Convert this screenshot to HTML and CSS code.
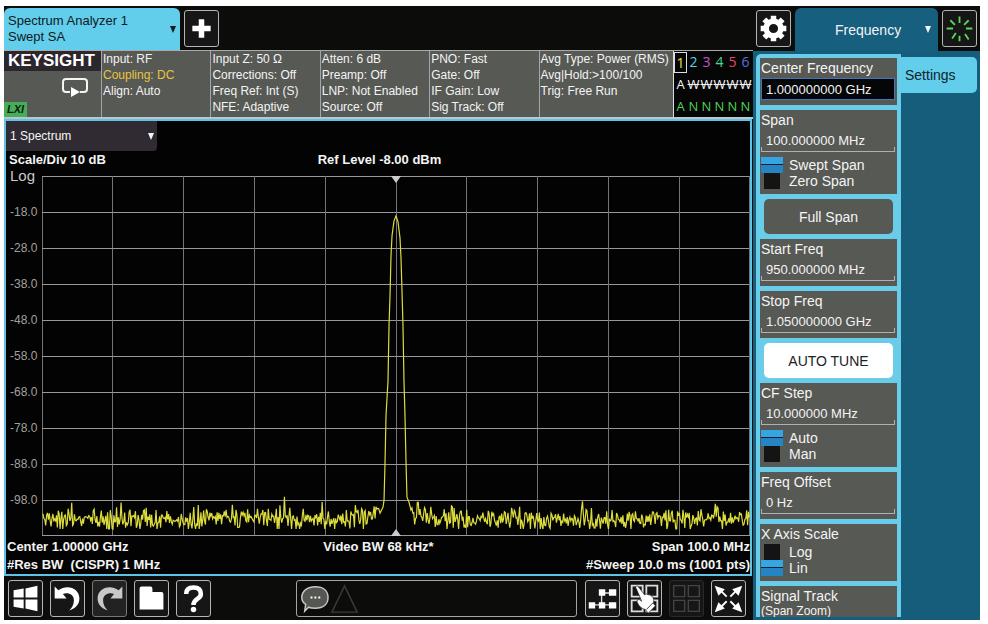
FILE: index.html
```html
<!DOCTYPE html>
<html lang="en">
<head>
<meta charset="utf-8">
<title>Spectrum Analyzer</title>
<link rel="stylesheet" href="styles.css">
</head>
<body>
<div class="screen">
  <main class="main">
    <header class="tabs">
      <button class="mode-tab" type="button"><span>Spectrum Analyzer 1<br>Swept SA</span><i class="caret"></i></button>
      <button class="tool" type="button" aria-label="Add screen">
        <svg viewBox="0 0 36 36"><path d="M18 8v20M8 18h20" stroke="#fff" stroke-width="6"/></svg>
      </button>
    </header>

    <section class="meas">
      <div class="brand">
        <div class="brand-name">KEYSIGHT</div>
        <svg class="sweep" viewBox="0 0 28 20"><path d="M9 15H5a3 3 0 0 1-3-3V5a3 3 0 0 1 3-3h18a3 3 0 0 1 3 3v7a3 3 0 0 1-3 3h-4" fill="none" stroke="#f4f4f4" stroke-width="2"/><path d="M10 10l9 5-9 5z" fill="#fff"/></svg>
        <div class="lxi">LXI</div>
      </div>
      <div class="cell">Input: RF<br><span class="warn">Coupling: DC</span><br>Align: Auto</div>
      <div class="cell">Input Z: 50 Ω<br>Corrections: Off<br>Freq Ref: Int (S)<br>NFE: Adaptive</div>
      <div class="cell">Atten: 6 dB<br>Preamp: Off<br>LNP: Not Enabled<br>Source: Off</div>
      <div class="cell">PNO: Fast<br>Gate: Off<br>IF Gain: Low<br>Sig Track: Off</div>
      <div class="cell">Avg Type: Power (RMS)<br>Avg|Hold:&gt;100/100<br>Trig: Free Run</div>
      <div class="traces">
        <b class="t1">1</b><b class="t2">2</b><b class="t3">3</b><b class="t4">4</b><b class="t5">5</b><b class="t6">6</b>
        <span>A</span><s>W</s><s>W</s><s>W</s><s>W</s><s>W</s>
        <em>A</em><em>N</em><em>N</em><em>N</em><em>N</em><em>N</em>
      </div>
    </section>

    <section class="window">
      <div class="window-tab">
        <select class="plain-select" aria-label="Measurement window"><option>1 Spectrum</option></select><i class="caret"></i>
      </div>
      <div class="info"><span>Scale/Div 10 dB</span><span>Ref Level -8.00 dBm</span><span></span></div>
      <div class="chart">
        <div class="axis"><span class="log">Log</span><span>-18.0</span><span>-28.0</span><span>-38.0</span><span>-48.0</span><span>-58.0</span><span>-68.0</span><span>-78.0</span><span>-88.0</span><span>-98.0</span></div>
        <div class="plot">
          <svg class="plot-svg" viewBox="0 0 710 361" preserveAspectRatio="none" role="img" aria-label="Spectrum trace">
            <g id="grid"></g>
            <polyline id="trace" points=""/>
            <path d="M350 0h10l-5 7zM350 361h10l-5-7z" fill="#c9cdd2"/>
          </svg>
        </div>
      </div>
      <div class="info foot"><span>Center 1.00000 GHz</span><span>Video BW 68 kHz*</span><span>Span 100.0 MHz</span></div>
      <div class="info foot"><span>#Res BW &nbsp;(CISPR) 1 MHz</span><span></span><span>#Sweep 10.0 ms (1001 pts)</span></div>
    </section>

    <footer class="toolbar">
      <button class="tool" type="button" aria-label="Windows">
        <svg viewBox="0 0 36 36" fill="#fff"><path d="M5 9l11-2v10H5zM18 7l13-3v13H18zM5 19h11v10L5 27zM18 19h13v13l-13-3z"/></svg>
      </button>
      <button class="tool" type="button" aria-label="Undo">
        <svg viewBox="0 0 36 36"><path d="M4 5v13h13l-4-5c6-2 12 1 12 7 0 5-2 8-5 11 7-2 11-7 11-13C31 7 18 2 8 9z" fill="#fff"/></svg>
      </button>
      <button class="tool dim" type="button" aria-label="Redo">
        <svg viewBox="0 0 36 36"><path d="M32 5v13H19l4-5c-6-2-12 1-12 7 0 5 2 8 5 11C9 29 5 24 5 18 5 7 18 2 28 9z" fill="#c8c8c8"/></svg>
      </button>
      <button class="tool" type="button" aria-label="File">
        <svg viewBox="0 0 36 36"><path d="M5 30V7q0-2 2-2h10q2 0 2 2v4h10q2 0 2 2v17z" fill="#fff"/></svg>
      </button>
      <button class="tool" type="button" aria-label="Help">
        <svg viewBox="0 0 36 36"><path d="M10 13c0-5 3-7 8-7s8 2 8 7c0 6-8 5-8 12" fill="none" stroke="#fff" stroke-width="5"/><circle cx="18" cy="30" r="3" fill="#fff"/></svg>
      </button>
      <div class="message">
        <svg viewBox="0 0 64 36"><path d="M18 6c8 0 13 4 13 11s-5 11-13 11c-3 0-5 0-7-1l-4 4 1-7c-3-2-4-4-4-7C4 10 10 6 18 6z" fill="#555753" stroke="#c8c8c8" stroke-width="1.5"/><path d="M13 17h2M17 17h2M21 17h2" stroke="#fff" stroke-width="2"/><path d="M48 5L61 32H35z" fill="none" stroke="#3a3a3a" stroke-width="1.5"/></svg>
      </div>
      <button class="tool" type="button" aria-label="Block diagram">
        <svg viewBox="0 0 36 36"><path d="M17 12h12M17 12v13M6 25h24" stroke="#ddd" stroke-width="1.5"/><path d="M14 8h7v7h-7zM25 8h8v7h-8zM3 22h7v7H3zM14 22h7v7h-7zM25 22h8v7h-8z" fill="#fff"/></svg>
      </button>
      <button class="tool" type="button" aria-label="Select window">
        <svg viewBox="0 0 36 36"><path d="M4 4h12v12H4zM20 4h12v12H20zM4 20h12v12H4zM20 20h12v12H20z" fill="none" stroke="#ddd" stroke-width="2"/><path d="M8 5q2-2 4 1l6 8q2-2 4 0 2-1 4 2 2 0 2 3l0 5 2 2-8 8-3-4q-6-1-9-8-1-3 2-3l3 2z" fill="#fff" stroke="#161616" stroke-width=".7"/><path d="M20 30l8-8" stroke="#333" stroke-width="1"/></svg>
      </button>
      <button class="tool off" type="button" aria-label="Window layout" disabled>
        <svg viewBox="0 0 36 36"><path d="M4 4h12v12H4zM20 4h12v12H20zM4 20h12v12H4zM20 20h12v12H20z" fill="none" stroke="#444" stroke-width="1.5"/></svg>
      </button>
      <button class="tool" type="button" aria-label="Full screen">
        <svg viewBox="0 0 36 36"><path d="M10 10l6 6M26 10l-6 6M10 27l6-6M26 27l-6-6" stroke="#fff" stroke-width="2"/><path d="M3 4l11 4-7 7zM33 4l-11 4 7 7zM3 33l4-11 7 7zM33 33l-4-11-7 7z" fill="#fff"/></svg>
      </button>
    </footer>
  </main>

  <aside class="side">
    <header class="side-head">
      <button class="tool" type="button" aria-label="System settings">
        <svg viewBox="0 0 36 36"><g fill="none" stroke="#fff"><circle cx="18" cy="18" r="8" stroke-width="6"/><path d="M18 4v5M18 27v5M4 18h5M27 18h5M8 8l4 4M24 24l4 4M28 8l-4 4M12 24l-4 4" stroke-width="6"/></g></svg>
      </button>
      <div class="menu-tab"><select class="plain-select" aria-label="Menu"><option>Frequency</option></select><i class="caret"></i></div>
      <button class="tool" type="button" aria-label="Busy">
        <svg viewBox="0 0 36 36"><path d="M18 5v7M18 26v6M4 18h7M25 18h7M8 9l5 5M28 9l-5 5M10 29l4-6M28 30l-4-6" stroke="#59d854" stroke-width="2"/></svg>
      </button>
    </header>
    <div class="side-body">
      <div class="controls">
        <div class="card"><label for="cf">Center Frequency</label><input class="value active" id="cf" type="text" value="1.000000000 GHz"></div>
        <div class="card"><label for="span">Span</label><input class="value" id="span" type="text" value="100.000000 MHz">
          <div class="switch gap"><label><input type="radio" name="span-type" checked>Swept Span</label><label><input type="radio" name="span-type">Zero Span</label></div></div>
        <button class="wide" type="button">Full Span</button>
        <div class="card"><label for="start">Start Freq</label><input class="value" id="start" type="text" value="950.000000 MHz"></div>
        <div class="card"><label for="stop">Stop Freq</label><input class="value" id="stop" type="text" value="1.050000000 GHz"></div>
        <button class="wide light" type="button">AUTO TUNE</button>
        <div class="card"><label for="step">CF Step</label><input class="value" id="step" type="text" value="10.000000 MHz">
          <div class="switch gap"><label><input type="radio" name="step-mode" checked>Auto</label><label><input type="radio" name="step-mode">Man</label></div></div>
        <div class="card"><label for="offset">Freq Offset</label><input class="value" id="offset" type="text" value="0 Hz"></div>
        <div class="card"><div class="title">X Axis Scale</div>
          <div class="switch"><label><input type="radio" name="x-scale">Log</label><label><input type="radio" name="x-scale" checked>Lin</label></div></div>
        <div class="card last"><div class="title">Signal Track</div><div class="sub">(Span Zoom)</div></div>
      </div>
      <nav class="pages"><a class="page-tab" href="#settings">Settings</a></nav>
    </div>
  </aside>
</div>
<script src="chart.js"></script>
</body>
</html>
```
FILE: styles.css
```css
* { box-sizing: border-box; }

body {
  margin: 0;
  padding: 6px 8px 4px 4px;
  height: 100vh;
  background: #fff;
  color: #f4f4f4;
  font: 14px/16px "Liberation Sans", Arial, sans-serif;
}

button, input, select { font: inherit; color: inherit; margin: 0; }

.screen {
  display: grid;
  grid-template-columns: minmax(0, 1fr) 227px;
  height: 100%;
  background: #0c0c0b;
  overflow: hidden;
}

.main { display: flex; flex-direction: column; min-width: 0; min-height: 0; }

.caret {
  width: 0;
  height: 0;
  border: 3px solid transparent;
  border-top: 7px solid currentColor;
  border-bottom: 0;
  pointer-events: none;
}

.tool {
  flex: none;
  width: 35px;
  height: 37px;
  padding: 0;
  border: 1px solid #b5b5b5;
  border-radius: 3px;
  background: #161616;
}
.tool svg { display: block; width: 33px; height: 35px; }
.tool.dim { border-color: #777; background: #222; }
.tool.off { border-color: #2a2a2a; }

/* top tabs */
.tabs { display: flex; align-items: center; gap: 4px; height: 44px; flex: none; }
.mode-tab {
  display: flex;
  align-items: center;
  justify-content: space-between;
  align-self: flex-end;
  width: 176px;
  height: 42px;
  padding: 0 4px;
  border: 0;
  border-radius: 6px 6px 0 0;
  background: #63cdec;
  color: #10191c;
  font-size: 13px;
  text-align: left;
}

/* measurement bar */
.meas {
  display: grid;
  grid-template-columns: 97px repeat(4, minmax(0, 109fr)) minmax(0, 134fr) 80px;
  height: 69px;
  flex: none;
  border-top: 1px solid #aaa;
  border-bottom: 2px solid #b9c6cb;
  background: #575955;
  font-size: 12px;
}
.brand { display: flex; flex-direction: column; justify-content: space-between; align-items: flex-start; }
.brand-name {
  width: 100%;
  height: 20px;
  padding-left: 4px;
  background: #2c262d;
  color: #fff;
  font: bold 17px/20px "Liberation Sans", Arial, sans-serif;
}
.sweep { width: 28px; height: 20px; margin-left: 57px; }
.lxi {
  width: 23px;
  height: 15px;
  background: #48ad58;
  color: #0c1a0e;
  font: italic bold 11px/15px "Liberation Sans", Arial, sans-serif;
  text-align: center;
}
.cell { border-left: 1px solid #a5a5a5; padding-left: 1px; white-space: nowrap; }
.warn { color: #e9c43c; }
.traces {
  display: grid;
  grid-template: repeat(3, 22px) / repeat(6, 13px);
  align-items: center;
  justify-items: center;
  border-left: 1px solid #ddd;
  background: #060606;
  font-family: "Open Sans", sans-serif;
  font-size: 13px;
}
.traces b { font-weight: 400; font-size: 14px; }
.traces em { color: #4fd257; font-style: normal; }
.traces .t1 { width: 13px; height: 21px; border: 1px solid #ddd; color: #e9e53a; line-height: 19px; text-align: center; }
.traces .t2 { color: #55d0e6; }
.traces .t3 { color: #cf4fd2; }
.traces .t4 { color: #4fd29a; }
.traces .t5 { color: #ec4464; }
.traces .t6 { color: #5570dc; }

/* measurement window */
.window {
  display: flex;
  flex: 1;
  flex-direction: column;
  min-height: 0;
  margin-right: 1px;
  border: 2px solid #5fc3e4;
  background: #030303;
}
.window-tab {
  display: flex;
  align-items: center;
  width: 151px;
  height: 30px;
  padding: 0 3px 0 4px;
  border-radius: 0 0 4px 0;
  background: #302b33;
  font-size: 12px;
}
.plain-select {
  flex: 1;
  min-width: 0;
  padding: 0;
  border: 0;
  background: transparent;
  appearance: none;
}
.info {
  display: grid;
  grid-template-columns: 1fr auto 1fr;
  padding: 0 0 0 3px;
  font-size: 13px;
  font-weight: 700;
  line-height: 18px;
  white-space: nowrap;
}
.info span:last-child { text-align: right; }
.foot { padding-left: 1px; }
.chart {
  display: grid;
  grid-template-columns: 36px minmax(0, 1fr);
  flex: 1;
  min-height: 0;
  padding: 7px 0 2px;
}
.axis {
  display: flex;
  flex-direction: column;
  justify-content: space-between;
  margin-top: -8px;
  padding: 0 3px 28px 4px;
  color: #a0a0a0;
  font-size: 12px;
  white-space: nowrap;
}
.log { color: #c8c8c8; font-size: 15px; }
.plot { min-height: 0; overflow: hidden; }
.plot-svg { display: block; width: 100%; height: 100%; }
.grid-line { stroke: #98989b; stroke-width: 1; shape-rendering: crispEdges; vector-effect: non-scaling-stroke; }
.grid-line.vertical { stroke: #747478; }
#trace { fill: none; stroke: #dcdc3c; stroke-width: 1.2; vector-effect: non-scaling-stroke; }

/* bottom toolbar */
.toolbar { display: flex; flex: none; align-items: center; gap: 7px; height: 44px; padding: 0 7px 0 4px; }
.message {
  flex: 1;
  height: 37px;
  margin-left: 78px;
  margin-right: 1px;
  border: 1px solid #a5a5a5;
  border-radius: 3px;
}
.message svg { display: block; width: 64px; height: 35px; }

/* side menu */
.side { display: flex; flex-direction: column; min-height: 0; }
.side-head { display: flex; align-items: center; gap: 4px; height: 45px; flex: none; padding: 0 3px; }
.menu-tab {
  display: flex;
  flex: 1;
  align-items: center;
  align-self: flex-end;
  height: 43px;
  padding: 0 7px 0 40px;
  border-radius: 6px 6px 0 0;
  background: #165f7f;
}
.side-body {
  display: flex;
  flex: 1;
  min-height: 0;
  padding: 3px;
  background: #165d7b;
}
.controls {
  display: flex;
  flex-direction: column;
  gap: 5px;
  width: 145px;
  padding: 4px 4px 0;
  overflow: hidden;
  border-radius: 5px 0 0 0;
  background: #69cdea;
}
.card { flex: none; padding: 0 2px 5px 1px; background: #575955; }
.card > label, .title { display: block; line-height: 20px; }
.value {
  display: block;
  width: 100%;
  height: 22px;
  padding: 0 5px;
  border: 0;
  border-bottom: 1px solid #b0b0b0;
  background:
    linear-gradient(#b0b0b0, #b0b0b0) 0 100% / 1px 4px no-repeat,
    linear-gradient(#b0b0b0, #b0b0b0) 100% 100% / 1px 4px no-repeat;
  font-size: 13px;
}
.value.active { padding: 0 4px; border: 1px solid #4474bd; background: #050608; }
.switch { display: flex; flex-direction: column; }
.switch.gap { margin-top: 5px; }
.switch label { display: flex; align-items: center; gap: 6px; height: 16px; }
.switch input {
  width: 16px;
  height: 16px;
  margin: 0 3px;
  border: 0;
  background: #141414;
  appearance: none;
}
.switch input:checked {
  width: 22px;
  margin: 0;
  background: linear-gradient(#35a5e4 0 7px, #12202a 7px 8px, #2585c2 8px);
}
.wide {
  flex: none;
  height: 35px;
  margin: 0 4px;
  border: 0;
  border-radius: 5px;
  background: #575955;
}
.wide.light { background: #fff; color: #222; }
.last { flex: 1; padding-bottom: 0; }
.sub { font-size: 12px; line-height: 10px; }
.pages { flex: 1; padding-top: 3px; }
.page-tab {
  display: flex;
  align-items: center;
  height: 36px;
  padding-left: 4px;
  border-radius: 0 5px 5px 0;
  background: #63cdec;
  color: #10222a;
  text-decoration: none;
}
```
FILE: chart.js
```js
const NS = "http://www.w3.org/2000/svg";
const W = 710, H = 361;
const grid = document.getElementById("grid");

function line(x1, y1, x2, y2, cls) {
  const el = document.createElementNS(NS, "line");
  el.setAttribute("x1", x1);
  el.setAttribute("y1", y1);
  el.setAttribute("x2", x2);
  el.setAttribute("y2", y2);
  el.setAttribute("class", cls);
  grid.appendChild(el);
}

for (let i = 0; i <= 10; i++) {
  const x = Math.min(W - 0.5, Math.max(0.5, i * W / 10));
  const y = Math.min(H - 0.5, Math.max(0.5, i * H / 10));
  line(x, 0, x, H, "grid-line vertical");
  line(0, y, W, y, "grid-line");
}

// Repeatable noise floor around a narrow carrier
let seed = 4177;
function rand() {
  seed = (seed * 16807) % 2147483647;
  return seed / 2147483647;
}

const carrier = [
  [339, 338], [342, 332], [343, 325], [344, 287], [345, 240], [347, 205],
  [348, 150], [349, 120], [350, 80], [351, 60], [353, 45], [355, 40],
  [357, 46], [359, 62], [360, 82], [361, 115], [362, 150], [363, 205],
  [364, 240], [365, 285], [366, 322], [368, 327], [370, 335]
];

function noise(from, to) {
  const out = [];
  for (let x = from; x < to; x += 0.9) {
    const spike = rand() > 0.95 ? -10 * rand() : 0;
    const near = Math.max(0, 1 - Math.abs(x - 355) / 45) * 8;
    const swing = 13 + 6 * Math.sin(x / 9) * Math.sin(x / 31);
    const y = 344 - near + (rand() + rand() - 1) * swing + spike;
    out.push([x, Math.min(y, 354)]);
  }
  return out;
}

const points = [...noise(1, 338), ...carrier, ...noise(371, W)];
document.getElementById("trace").setAttribute(
  "points", points.map(p => p[0].toFixed(1) + "," + p[1].toFixed(1)).join(" "));
```
